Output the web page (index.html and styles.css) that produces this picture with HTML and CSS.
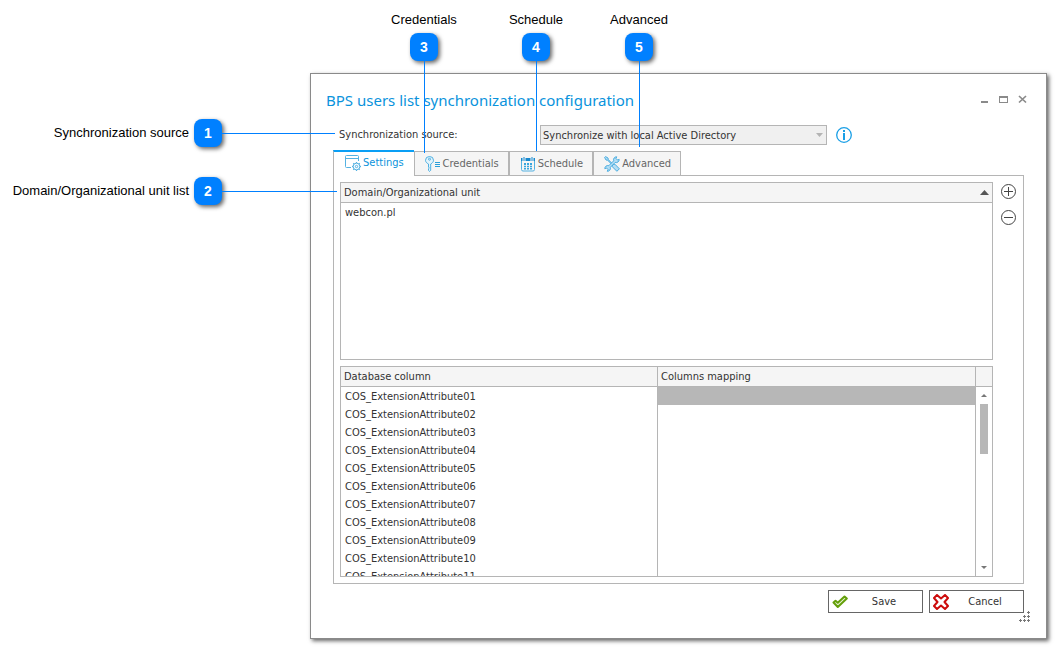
FILE: index.html
```html
<!DOCTYPE html>
<html lang="en">
<head>
<meta charset="utf-8">
<title>BPS users list synchronization configuration</title>
<link rel="stylesheet" href="styles.css">
</head>
<body>
<main class="dialog">
  <header class="dialog-header">
    <h1 class="dialog-title">BPS users list synchronization configuration</h1>
    <div class="window-controls">
      <button class="icon-button" type="button" aria-label="Minimize"><svg width="11" height="11" viewBox="0 0 11 11"><path d="M2 7h7v2H2z" fill="#8a8a8a"/></svg></button>
      <button class="icon-button" type="button" aria-label="Maximize"><svg width="11" height="11" viewBox="0 0 11 11"><path d="M1 2h9v7H1zM2 4v4h7V4z" fill="#8a8a8a" fill-rule="evenodd"/></svg></button>
      <button class="icon-button" type="button" aria-label="Close"><svg width="11" height="11" viewBox="0 0 11 11"><path d="M2 2l7 6.500M9 2l-7 6.500" stroke="#8a8a8a" stroke-width="1.700" fill="none"/></svg></button>
    </div>
  </header>

  <div class="source-row">
    <label class="source-label" for="source">Synchronization source:</label>
    <div class="select-box">
      <select id="source" disabled><option>Synchronize with local Active Directory</option></select>
      <svg class="select-arrow" width="7" height="4" viewBox="0 0 7 4"><path d="M0 0h7L3.500 4z" fill="#b4b4b4"/></svg>
    </div>
    <button class="icon-button" type="button" aria-label="Information"><svg width="16" height="16" viewBox="0 0 16 16"><circle cx="8" cy="8" r="7.300" fill="none" stroke="#1a9fe6" stroke-width="1.300"/><path d="M7 3h2v2H7zM7 6h2v7H7z" fill="#1a9fe6"/></svg></button>
  </div>

  <div class="tabs" role="tablist">
    <button class="tab tab-active" type="button" role="tab" aria-selected="true">
      <svg width="16" height="16" viewBox="0 0 16 16" fill="none" stroke="#55b2e2"><path d="M6 12.500H1.500a1 1 0 0 1-1-1v-10a1 1 0 0 1 1-1h11a1 1 0 0 1 1 1V6M.5 3.500h13"/><circle cx="11.500" cy="11.500" r="3.300"/><circle cx="11.500" cy="11.500" r="1.200"/><path d="M11.500 7v1M11.500 15v1M7 11.500h1M15 11.500h1M8.300 8.300l.8.8M14.700 8.300l-.8.8M8.300 14.700l.8-.8M14.700 14.700l-.8-.8" stroke-width="1.300"/></svg>
      <span>Settings</span></button>
    <button class="tab" type="button" role="tab" aria-selected="false">
      <svg width="16" height="16" viewBox="0 0 16 16" fill="none" stroke="#4fb0e2"><path d="M3.500 8C1.500 7 .5 5.800.5 4.300a4 3.800 0 0 1 8 0C8.500 5.800 7.500 7 5.700 8v6.300l-1.200 1.200-1-1.200v-1.500l.8-.8-.8-1z" fill="#e4f4fc"/><circle cx="4.500" cy="3.200" r="1"/><path d="M10 6.500h5M10 8.500h5M10 10.500h5" stroke="#2b9fd9"/></svg>
      <span>Credentials</span></button>
    <button class="tab" type="button" role="tab" aria-selected="false">
      <svg width="16" height="16" viewBox="0 0 16 16"><path d="M1.500 5v8.500a1.500 1.500 0 0 0 1.500 1.500h10a1.500 1.500 0 0 0 1.500-1.500V5" fill="none" stroke="#55b2e2"/><path d="M1 2h1.500v3H1zM5.500 2h5v3h-5zM13.500 2H15v3h-1.500zM3.500 1h1v4h-1zM11.500 1h1v4h-1z" fill="#1689cf"/><path d="M4 7h2v2H4zM7 7h2v2H7zM10 7h2v2h-2zM4 9.700h2v1.500H4zM7 9.700h2v1.500H7zM10 9.700h2v1.500h-2zM4 12h2v1.500H4zM7 12h2v1.500H7zM10 12h2v1.500h-2z" fill="#3aa6de"/></svg>
      <span>Schedule</span></button>
    <button class="tab" type="button" role="tab" aria-selected="false">
      <svg width="16" height="16" viewBox="0 0 16 16" fill="#b5def4" stroke="#3aa6de" stroke-width=".9" stroke-linejoin="round"><path d="M1.500.6L4 2l.4 1.700 4.800 4.800 1.700-.3 4.500 4.600-2.500 2.500-4.600-4.600.2-1.600L3.700 4.300 2 4 .6 1.500z"/><path d="M12.700.8a3 3 0 0 0-3 4L4.800 9.700a3 3 0 0 0-4 3L2.500 12l1.500 1.500-.7 1.800a3 3 0 0 0 3-4l4.900-4.900a3 3 0 0 0 4-3L13.500 4 12 2.500z"/></svg>
      <span>Advanced</span></button>
  </div>

  <section class="panel">
    <div class="grids">
      <div class="list">
        <table class="grid">
          <thead><tr><th><div class="sorted"><span>Domain/Organizational unit</span><svg width="9" height="5" viewBox="0 0 9 5"><path d="M0 5h9L4.500 0z" fill="#555"/></svg></div></th></tr></thead>
          <tbody><tr><td>webcon.pl</td></tr></tbody>
        </table>
      </div>
      <div class="mapping">
        <div class="mapping-view">
          <table class="grid grid-split">
            <thead><tr><th>Database column</th><th>Columns mapping</th></tr></thead>
            <tbody>
              <tr><td>COS_ExtensionAttribute01</td><td class="selected"></td></tr>
              <tr><td>COS_ExtensionAttribute02</td><td></td></tr>
              <tr><td>COS_ExtensionAttribute03</td><td></td></tr>
              <tr><td>COS_ExtensionAttribute04</td><td></td></tr>
              <tr><td>COS_ExtensionAttribute05</td><td></td></tr>
              <tr><td>COS_ExtensionAttribute06</td><td></td></tr>
              <tr><td>COS_ExtensionAttribute07</td><td></td></tr>
              <tr><td>COS_ExtensionAttribute08</td><td></td></tr>
              <tr><td>COS_ExtensionAttribute09</td><td></td></tr>
              <tr><td>COS_ExtensionAttribute10</td><td></td></tr>
              <tr><td>COS_ExtensionAttribute11</td><td></td></tr>
            </tbody>
          </table>
        </div>
        <div class="scrollbar">
          <div class="scroll-head"></div>
          <div class="scroll-track">
            <svg width="6" height="3" viewBox="0 0 6 3"><path d="M0 3h6L3 0z" fill="#777"/></svg>
            <div class="scroll-thumb"></div>
            <svg width="6" height="3" viewBox="0 0 6 3"><path d="M0 0h6L3 3z" fill="#777"/></svg>
          </div>
        </div>
      </div>
    </div>
    <div class="tools">
      <button class="icon-button" type="button" aria-label="Add"><svg width="15" height="15" viewBox="0 0 15 15" fill="none" stroke="#444"><circle cx="7.500" cy="7.500" r="7"/><path d="M3 7.500h9M7.500 3v9"/></svg></button>
      <button class="icon-button" type="button" aria-label="Remove"><svg width="15" height="15" viewBox="0 0 15 15" fill="none" stroke="#444"><circle cx="7.500" cy="7.500" r="7"/><path d="M3 7.500h9"/></svg></button>
    </div>
  </section>

  <footer class="actions">
    <button class="action" type="button"><svg width="16" height="16" viewBox="0 0 16 16"><path d="M1.500 8.500L3.500 6.800l2.300 2L12.500 2.500l2.300 2L5.800 13z" fill="#e9f3d6" stroke="#649f0a" stroke-width="2" stroke-linejoin="round"/></svg><span>Save</span></button>
    <button class="action" type="button"><svg width="16" height="16" viewBox="0 0 16 16"><path d="M4 1L8 4.500 12 1l3 3-3.500 4L15 12l-3 3-4-3.500L4 15l-3-3 3.500-4L1 4z" fill="#fff" stroke="#cc0c0c" stroke-width="2" stroke-linejoin="round"/></svg><span>Cancel</span></button>
  </footer>
  <svg class="grip" width="11" height="11" viewBox="0 0 11 11"><path d="M8 1.500h3M9.500 0v3M4 5.500h3M5.500 4v3M8 5.500h3M9.500 4v3M0 9.500h3M1.500 8v3M4 9.500h3M5.500 8v3M8 9.500h3M9.500 8v3" stroke="#777"/></svg>
</main>

<div class="callout callout-side callout-1"><span>Synchronization source</span><b class="badge">1</b><i class="line"></i></div>
<div class="callout callout-side callout-2"><span>Domain/Organizational unit list</span><b class="badge">2</b><i class="line"></i></div>
<div class="callout callout-top callout-3"><span>Credentials</span><b class="badge">3</b><i class="line"></i></div>
<div class="callout callout-top callout-4"><span>Schedule</span><b class="badge">4</b><i class="line"></i></div>
<div class="callout callout-top callout-5"><span>Advanced</span><b class="badge">5</b><i class="line"></i></div>
</body>
</html>
```
FILE: styles.css
```css
* { box-sizing: border-box; }
body {
  margin: 0;
  padding: 73px 9px 9px 310px;
  background: #fff;
  color: #333;
  font: 11px/18px Tahoma, "DejaVu Sans Condensed", "Noto Sans", sans-serif;
}
button, select { font: inherit; color: inherit; margin: 0; }
svg { display: block; flex: none; }

.dialog {
  position: relative;
  border: 1px solid #8a8a8a;
  background: #fff;
  padding: 0 22px 25px;
  box-shadow: 2px 2px 4px rgba(0, 0, 0, .6);
}
.dialog-header {
  display: flex;
  align-items: center;
  justify-content: space-between;
  height: 51px;
  margin: 0 -4px 0 -7px;
}
.dialog-title { margin: 0; font: 15px/18px Tahoma, "Noto Sans", sans-serif; color: #0a93dc; }
.window-controls { display: flex; gap: 8px; }
.icon-button { display: block; padding: 0; border: 0; background: none; }

.source-row { display: flex; align-items: center; height: 20px; padding-left: 6px; }
.source-label { width: 201px; }
.select-box { position: relative; width: 287px; margin-right: 9px; }
.select-box select {
  display: block;
  appearance: none;
  width: 100%;
  height: 20px;
  padding: 1px 2px 0;
  border: 1px solid #b5b5b5;
  border-radius: 0;
  background: #f0f0f0;
  color: #333;
  opacity: 1;
}
.select-arrow { position: absolute; right: 4px; top: 8px; }

.tabs { display: flex; align-items: flex-end; margin-top: 5px; }
.tab {
  display: flex;
  align-items: center;
  gap: 2px;
  height: 24px;
  padding: 0 9px 0 10px;
  border: 1px solid #b5b5b5;
  border-bottom: 0;
  border-radius: 0;
  background: #f5f5f5;
  color: #666;
}
.tab-active {
  position: relative;
  height: 26px;
  margin-bottom: -1px;
  padding: 0 10px 2px 11px;
  border-top: 2px solid #0a9ff5;
  border-right: 0;
  background: #fff;
  color: #0a93dc;
}

.panel { display: flex; gap: 8px; padding: 6px 7px 6px 6px; border: 1px solid #b5b5b5; }
.grids { flex: 1; min-width: 0; display: flex; flex-direction: column; gap: 6px; }
.list { min-height: 178px; border: 1px solid #b5b5b5; }
.grid { width: 100%; border-collapse: separate; border-spacing: 0; table-layout: fixed; }
.grid th {
  height: 20px;
  padding: 0 3px;
  background: #f5f5f5;
  border-bottom: 1px solid #b5b5b5;
  font-weight: 400;
  text-align: left;
}
.grid td { height: 18px; padding: 1px 4px 0; line-height: 17px; }
.grid .selected { background: #b7b7b7; }
.sorted { display: flex; align-items: center; justify-content: space-between; }
.grid-split th:first-child, .grid-split td:first-child { border-right: 1px solid #b5b5b5; }

.mapping { display: flex; height: 211px; border: 1px solid #b5b5b5; }
.mapping-view { flex: 1; min-width: 0; overflow: hidden; }
.scrollbar { display: flex; flex-direction: column; width: 17px; border-left: 1px solid #b5b5b5; }
.scroll-head { height: 20px; background: #f5f5f5; border-bottom: 1px solid #b5b5b5; }
.scroll-track { flex: 1; display: flex; flex-direction: column; align-items: center; padding: 7px 0; }
.scroll-thumb { width: 8px; height: 50px; margin: 7px 0 auto; background: #b7b7b7; }
.tools { display: flex; flex-direction: column; gap: 11px; padding-top: 2px; }

.actions { display: flex; justify-content: flex-end; gap: 6px; margin-top: 6px; }
.action {
  display: flex;
  align-items: center;
  width: 95px;
  height: 23px;
  padding: 0 2px 0 3px;
  border: 1px solid #666;
  border-radius: 0;
  background: #fff;
}
.action span { flex: 1; text-align: center; }
.grip { position: absolute; right: 16px; bottom: 16px; }

.callout { position: absolute; display: flex; align-items: center; color: #000; font: 13px/16px "Liberation Sans", Arial, sans-serif; white-space: nowrap; }
.callout-side { left: 0; gap: 5px; }
.callout-side span { width: 189px; text-align: right; }
.callout-1 { top: 119px; width: 335px; }
.callout-2 { top: 177px; width: 337px; }
.callout-side .line { flex: 1; height: 1px; margin-left: -5px; background: #0080ff; }
.callout-top { top: 12px; flex-direction: column; width: 80px; }
.callout-3 { left: 384px; height: 141px; }
.callout-4 { left: 496px; height: 139px; }
.callout-5 { left: 599px; height: 135px; }
.callout-top .badge { margin-top: 5px; }
.callout-top .line { flex: 1; width: 1px; background: #0080ff; }
.badge {
  flex: none;
  width: 28px;
  height: 28px;
  border-radius: 8px;
  background: #0080ff;
  color: #fff;
  font-size: 14px;
  line-height: 28px;
  text-align: center;
  box-shadow: 2px 2px 4px rgba(0, 0, 0, .6);
}
```
